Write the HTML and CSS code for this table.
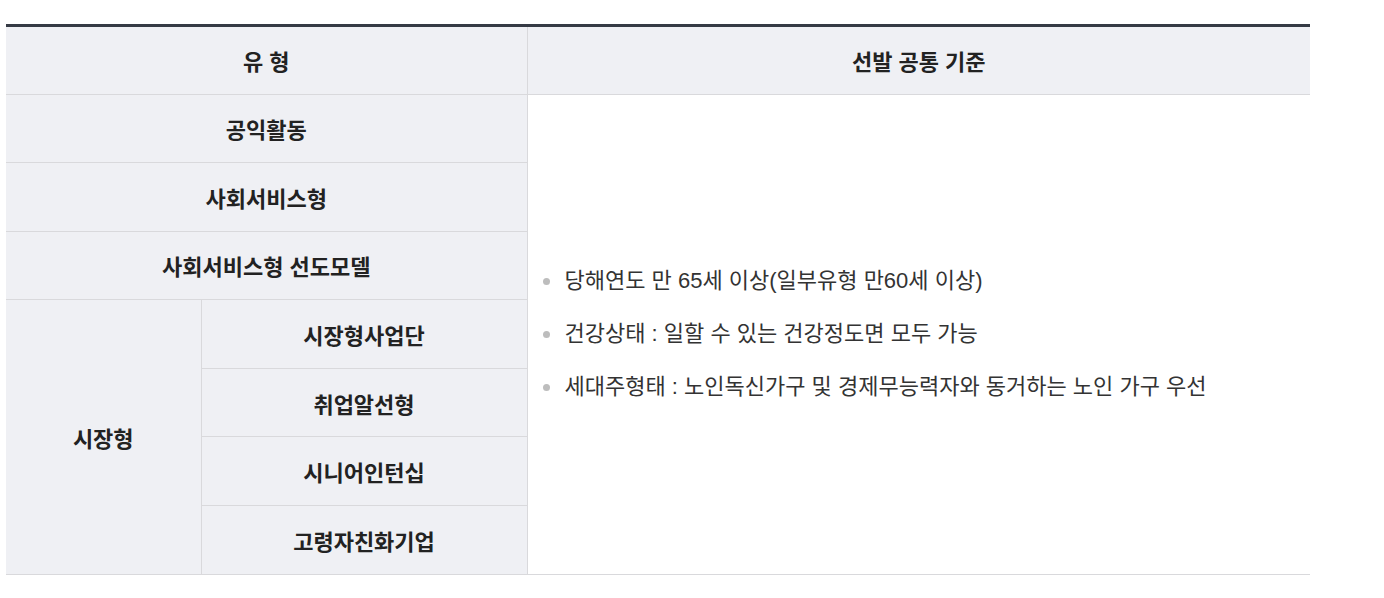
FILE: index.html
```html
<!DOCTYPE html>
<html lang="ko">
<head>
<meta charset="utf-8">
<link rel="stylesheet" href="styles.css">
</head>
<body>
<div class="wrap">
<table class="tbl">
  <colgroup>
    <col class="c1"><col class="c2"><col class="c3">
  </colgroup>
  <thead>
    <tr><th colspan="2">유 형</th><th>선발 공통 기준</th></tr>
  </thead>
  <tbody>
    <tr><th colspan="2">공익활동</th>
      <td rowspan="7" class="crit">
        <ul class="list">
          <li>당해연도 만 65세 이상(일부유형 만60세 이상)</li>
          <li>건강상태 : 일할 수 있는 건강정도면 모두 가능</li>
          <li>세대주형태 : 노인독신가구 및 경제무능력자와 동거하는 노인 가구 우선</li>
        </ul>
      </td>
    </tr>
    <tr><th colspan="2">사회서비스형</th></tr>
    <tr><th colspan="2">사회서비스형 선도모델</th></tr>
    <tr><th rowspan="4">시장형</th><th>시장형사업단</th></tr>
    <tr><th>취업알선형</th></tr>
    <tr><th>시니어인턴십</th></tr>
    <tr><th>고령자친화기업</th></tr>
  </tbody>
</table>
</div>
</body>
</html>
```

FILE: styles.css
```css
html, body {
  margin: 0;
  padding: 0;
  background: #fff;
}
body {
  font-family: "Liberation Sans", "Noto Sans CJK KR", sans-serif;
  color: #333;
}
.wrap {
  padding: 24px 6px 0 6px;
  width: 1304px;
}
.tbl {
  width: 1304px;
  border-collapse: collapse;
  table-layout: fixed;
  border-top: 3px solid #353a44;
}
.c1 { width: 195px; }
.c2 { width: 326px; }
.c3 { width: 783px; }
.tbl th, .tbl td {
  border: 1px solid #d9d9dc;
  padding: 0;
  height: 67.6px;
  font-size: 22px;
  vertical-align: middle;
}
.tbl thead th { height: 66.5px; border-top: none; }
.tbl tr > :first-child { border-left: none; }
.tbl tr > :last-child { border-right: none; }
.tbl th {
  background: #eff0f4;
  color: #222;
  font-weight: 700;
  text-align: center;
}
.tbl tbody th[rowspan] { border-left: none; }
.crit {
  background: #fff;
  border-right: none;
  padding-left: 15px !important;
}
.list {
  list-style: none;
  margin: 0;
  padding: 0;
  display: flex;
  flex-direction: column;
  gap: 23px;
}
.list li {
  position: relative;
  padding-left: 22px;
  line-height: 30px;
  font-size: 22px;
  color: #333;
}
.list li::before {
  content: "";
  position: absolute;
  left: 0;
  top: 12px;
  width: 7px;
  height: 7px;
  border-radius: 50%;
  background: #bdbdbd;
}
```
